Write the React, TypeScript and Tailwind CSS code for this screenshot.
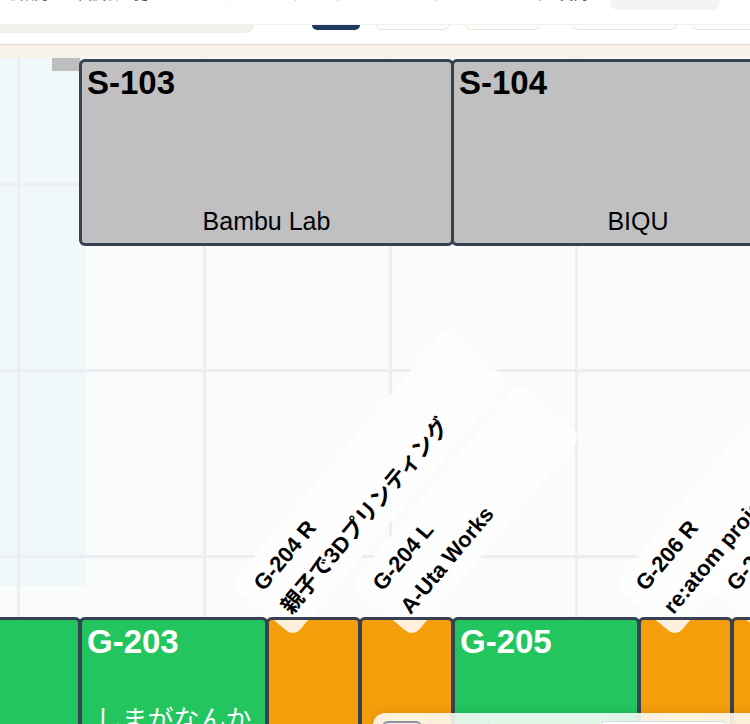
const topBooths = [
  { id: "S-103", name: "Bambu Lab", pos: "left-[79px] w-[375px]" },
  { id: "S-104", name: "BIQU", pos: "left-[451px] w-[374px]" },
];

const rowBooths = [
  { pos: "left-[-109px] w-[190px]", fill: "bg-[#22c55e]" },
  { pos: "left-[79px] w-[189px]", fill: "bg-[#22c55e]", id: "G-203", name: "しまがなんか" },
  { pos: "left-[266px] w-[95px]", fill: "bg-[#f59e0b]" },
  { pos: "left-[359px] w-[95px]", fill: "bg-[#f59e0b]" },
  { pos: "left-[452px] w-[188px]", fill: "bg-[#22c55e]", id: "G-205" },
  { pos: "left-[638px] w-[95px]", fill: "bg-[#f59e0b]" },
  { pos: "left-[731px] w-[95px]", fill: "bg-[#f59e0b]" },
];

// bottom-left corner of each tag sits on the small booth it points to
const tags = [
  { pos: "left-[294px] w-[334px]", code: "G-204 R", name: "親子で3Dプリンティング" },
  { pos: "left-[413px] w-[262px]", code: "G-204 L", name: "A-Uta Works" },
  { pos: "left-[676px] w-[300px]", code: "G-206 R", name: "re:atom project" },
  { pos: "left-[767px] w-[280px]", code: "G-206 L", name: "Makers Lab" },
];

function Header() {
  return (
    <header className="shrink-0">
      <div className="flex h-[25px] items-start overflow-hidden border-b border-[#f1f1f1] bg-white">
        <p className="-mt-[13px] min-w-0 flex-1 overflow-hidden whitespace-nowrap pl-[6px] text-[14px] leading-[14px] text-[#4b5160] [word-spacing:26px]">
          ご案内 出展者一覧 フロアマップ タイムテーブル アクセス よくある質問 お問い合わせ
        </p>
        <div className="mr-[30px] h-[10px] w-[110px] shrink-0 rounded-b-lg bg-[#f3f4f6]" />
      </div>
      <div className="flex h-[19px] items-start">
        <div className="h-[8px] w-[268px] rounded-br-[8px] bg-[#f0efeb]" />
        <div className="ml-[58px] h-[5px] w-[51px] rounded-b-full bg-[#1e3a5f]" />
        <div className="ml-[16px] h-[5px] w-[77px] rounded-b-full border border-t-0 border-[#ebe4d2] bg-white" />
        <div className="ml-[17px] h-[5px] w-[76px] rounded-b-full border border-t-0 border-[#ebe4d2] bg-white" />
        <div className="ml-[34px] h-[5px] w-[109px] rounded-b-full border border-t-0 border-[#ebe4d2] bg-white" />
        <div className="ml-[17px] h-[5px] w-[60px] rounded-bl-full border border-t-0 border-r-0 border-[#ebe4d2] bg-white" />
      </div>
      <div className="h-[14px] border-t border-[#e2ddd0] bg-[#f7f3e8]" />
    </header>
  );
}

function FloorMap() {
  return (
    <div className="relative flex-1 overflow-hidden bg-[#fafbfb]">
      <div className="absolute left-0 top-0 h-[528px] w-[86px] bg-[#f0f8fb]" />
      <div className="absolute left-[52px] top-0 h-[13px] w-[28px] bg-[#bebebe]" />
      <div className="absolute inset-0 bg-[linear-gradient(to_right,#eceef2_3px,transparent_3px),linear-gradient(to_bottom,#eceef2_3px,transparent_3px)] bg-[size:186px_186px] bg-[position:17px_125px]" />

      {topBooths.map((b) => (
        <div
          key={b.id}
          className={`absolute top-[1px] flex h-[187px] flex-col justify-between rounded-md border-[3px] border-[#374151] bg-[#c0c0c0] px-[5px] pb-[9px] pt-[4px] text-black ${b.pos}`}
        >
          <div className="text-[33px] font-bold leading-none">{b.id}</div>
          <div className="text-center text-[25px] leading-none">{b.name}</div>
        </div>
      ))}

      {rowBooths.map((b, i) => (
        <div key={i} className={`absolute top-[559px] h-[200px] rounded-md ${b.fill} ${b.pos}`} />
      ))}

      {tags.map((t) => (
        <div
          key={t.code}
          className={`absolute top-[497px] h-[82px] origin-bottom-left rotate-[-50deg] whitespace-nowrap rounded-[10px] bg-white/85 pl-[15px] pt-[5px] text-[22px] font-bold leading-[36px] text-black ${t.pos}`}
        >
          <div>{t.code}</div>
          <div>{t.name}</div>
        </div>
      ))}

      {rowBooths.map((b, i) => (
        <div
          key={i}
          className={`absolute top-[559px] h-[200px] rounded-md border-[3px] border-[#374151] px-[5px] pt-[5px] text-white ${b.pos}`}
        >
          {b.id && <div className="text-[33px] font-bold leading-none">{b.id}</div>}
          {b.name && <div className="mt-[49px] text-center text-[26px] leading-none">{b.name}</div>}
        </div>
      ))}
    </div>
  );
}

function Toolbar() {
  return (
    <div className="absolute left-[373px] top-[713px] flex h-[48px] w-[400px] items-start rounded-tl-[12px] bg-white/85 pl-[9px] pt-[8px] shadow-[0_-2px_8px_rgba(0,0,0,0.08)] backdrop-blur-md">
      <div className="h-[30px] w-[40px] rounded-md border-2 border-[#8a94a6]" />
      <div className="ml-[8px] h-[20px] w-px bg-[#e5e7eb]" />
      <div className="ml-[57px] h-[20px] w-px bg-[#e5e7eb]" />
      <div className="ml-[101px] h-[20px] w-px bg-[#e5e7eb]" />
      <div className="ml-[9px] h-[30px] w-[127px] rounded-md border border-[#d4d8de] bg-white" />
      <div className="ml-[8px] h-[20px] w-px bg-[#e5e7eb]" />
    </div>
  );
}

export default function App() {
  return (
    <div className="relative flex h-[724px] w-[750px] flex-col overflow-hidden bg-white font-['Liberation_Sans','Noto_Sans_CJK_JP',sans-serif]">
      <Header />
      <FloorMap />
      <Toolbar />
    </div>
  );
}
